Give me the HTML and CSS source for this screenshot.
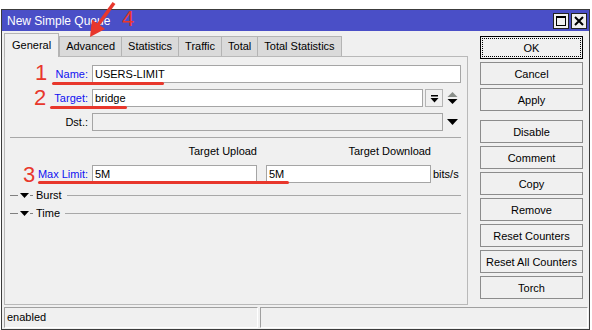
FILE: index.html
```html
<!DOCTYPE html>
<html lang="en">
  <head>
    <meta charset="UTF-8" />
    <title>New Simple Queue</title>
    <link rel="stylesheet" href="styles.css">
  </head>
  <body>
    <div class="screen">
      <div class="window">
        <div class="titlebar">
          <span class="title">New Simple Queue</span>
          <div class="win-btns">
            <span class="win-btn">
              <svg width="12" height="12" viewBox="0 0 12 12"><rect x="1.5" y="1.5" width="9" height="9" fill="none" stroke="#000" stroke-width="1"/><line x1="1" y1="2" x2="11" y2="2" stroke="#000" stroke-width="2"/></svg>
            </span>
            <span class="win-btn">
              <svg width="12" height="12" viewBox="0 0 12 12"><path d="M2 2 L10 10 M10 2 L2 10" stroke="#000" stroke-width="2"/></svg>
            </span>
          </div>
        </div>

        <div class="content">
          <div class="left">
            <div class="tabs">
              <div class="tab active">General</div>
              <div class="tab">Advanced</div>
              <div class="tab">Statistics</div>
              <div class="tab">Traffic</div>
              <div class="tab">Total</div>
              <div class="tab">Total Statistics</div>
            </div>

            <div class="panel">
              <div class="row">
                <label class="lbl link">Name:</label>
                <div class="field">USERS-LIMIT</div>
              </div>
              <div class="row">
                <label class="lbl link">Target:</label>
                <div class="field">bridge</div>
                <span class="dd-btn">
                  <svg width="9" height="9" viewBox="0 0 9 9"><rect x="1" y="1" width="7" height="1.5" fill="#000"/><path d="M0.5 4 H8.5 L4.5 8.5 Z" fill="#000"/></svg>
                </span>
                <span class="spin">
                  <svg width="11" height="14" viewBox="0 0 11 14"><path d="M0.5 6 L5.5 1 L10.5 6 Z" fill="#8a8f8a"/><path d="M0.5 8 H10.5 L5.5 13 Z" fill="#000"/></svg>
                </span>
              </div>
              <div class="row">
                <label class="lbl">Dst.:</label>
                <div class="field disabled"></div>
                <span class="dd-arrow">
                  <svg width="11" height="6" viewBox="0 0 11 6"><path d="M0 0 H11 L5.5 6 Z" fill="#000"/></svg>
                </span>
              </div>

              <div class="separator"></div>

              <div class="row heads">
                <span class="lbl"></span>
                <span class="head">Target Upload</span>
                <span class="head">Target Download</span>
              </div>
              <div class="row limits">
                <label class="lbl link">Max Limit:</label>
                <div class="field half">5M</div>
                <div class="field half">5M</div>
                <span class="unit">bits/s</span>
              </div>

              <div class="group">
                <span class="dash"></span>
                <svg class="tri" width="9" height="5" viewBox="0 0 9 5"><path d="M0 0 H9 L4.5 5 Z" fill="#000"/></svg>
                <span class="dash small"></span>
                <span class="group-name">Burst</span>
                <span class="rule"></span>
              </div>
              <div class="group">
                <span class="dash"></span>
                <svg class="tri" width="9" height="5" viewBox="0 0 9 5"><path d="M0 0 H9 L4.5 5 Z" fill="#000"/></svg>
                <span class="dash small"></span>
                <span class="group-name">Time</span>
                <span class="rule"></span>
              </div>
            </div>
          </div>

          <div class="buttons">
            <button class="btn ok">OK</button>
            <button class="btn">Cancel</button>
            <button class="btn">Apply</button>
            <button class="btn spaced">Disable</button>
            <button class="btn">Comment</button>
            <button class="btn">Copy</button>
            <button class="btn">Remove</button>
            <button class="btn">Reset Counters</button>
            <button class="btn">Reset All Counters</button>
            <button class="btn">Torch</button>
          </div>
        </div>

        <div class="statusbar">
          <div class="status first">enabled</div>
          <div class="status"></div>
        </div>
      </div>

      <!-- red annotations drawn over the dialog -->
      <span class="mark mark-1">1</span>
      <span class="mark mark-2">2</span>
      <span class="mark mark-3">3</span>
      <span class="mark mark-4">4</span>
      <span class="underline ul-name"></span>
      <span class="underline ul-target"></span>
      <span class="underline ul-limit"></span>
      <svg class="arrow" width="130" height="40" viewBox="0 0 130 40">
        <line x1="114" y1="3" x2="98" y2="25" stroke="#e8372c" stroke-width="3.5"/>
        <path d="M90 37 L92 19.5 L105 29 Z" fill="#e8372c"/>
      </svg>
    </div>
  </body>
</html>
```

FILE: styles.css
```css
body {
  margin: 0;
  padding: 0;
  background-color: #ffffff;
  font-family: "Liberation Sans", Arial, sans-serif;
  font-size: 11px;
  color: #000;
}

.screen {
  position: relative;
  width: 592px;
  height: 330px;
  overflow: hidden;
}

.window {
  margin: 9px 0 0 1px;
  width: 589px;
  height: 321px;
  box-sizing: border-box;
  border: 1px solid #3c3c3c;
  background-color: #f0f0f0;
  display: flex;
  flex-direction: column;
}

.titlebar {
  height: 21px;
  background-color: #4a4fc7;
  color: #fff;
  display: flex;
  align-items: center;
  padding-left: 5px;
}

.title {
  font-size: 12px;
  flex: 1;
}

.win-btns {
  display: flex;
  gap: 2px;
  margin-right: 2px;
}

.win-btn {
  width: 14px;
  height: 14px;
  border: 1px solid #222;
  background-color: #f0f0f0;
  display: flex;
  align-items: center;
  justify-content: center;
}

.content {
  display: flex;
  flex: 1;
  padding: 2px 0 0 2px;
}

/* Left side: tabs and panel */
.left {
  width: 464px;
  display: flex;
  flex-direction: column;
}

.tabs {
  display: flex;
  align-items: flex-end;
  height: 23px;
}

.tab {
  height: 19px;
  line-height: 19px;
  padding: 0 6px;
  border: 1px solid #b4b4b4;
  border-bottom: none;
  margin-right: -1px;
  background-color: #dadada;
  white-space: nowrap;
}

.tab.active {
  height: 23px;
  line-height: 22px;
  background-color: #f0f0f0;
  margin-bottom: -1px;
  margin-right: 0;
  padding: 0 7px;
  z-index: 1;
}

.panel {
  flex: 1;
  border: 1px solid #b9b9b9;
  padding: 8px 6px 0 0;
  margin-bottom: 0;
}

.row {
  display: flex;
  align-items: center;
  height: 18px;
  margin-bottom: 6px;
}

.lbl {
  width: 83px;
  padding-right: 4px;
  text-align: right;
  flex: none;
  white-space: nowrap;
}

.lbl.link {
  color: #1010f0;
}

.field {
  flex: 1;
  height: 18px;
  box-sizing: border-box;
  border: 1px solid #a5a5a5;
  background-color: #fff;
  padding: 0 2px;
  line-height: 16px;
}

.field.disabled {
  background-color: #f0f0f0;
}

.dd-btn {
  width: 18px;
  height: 18px;
  box-sizing: border-box;
  margin-left: 2px;
  border: 1px solid #b4b4b4;
  display: flex;
  align-items: center;
  justify-content: center;
}

.spin,
.dd-arrow {
  width: 18px;
  display: flex;
  justify-content: center;
}

.separator {
  height: 1px;
  background-color: #a8a8a8;
  margin: 1px 0 6px 5px;
}

.heads {
  height: 14px;
  margin-bottom: 7px;
}

.head {
  width: 165px;
  text-align: right;
  margin-right: 9px;
}

.limits {
  margin-bottom: 3px;
}

.field.half {
  flex: none;
  width: 165px;
}

.field.half + .field.half {
  margin-left: 9px;
}

.unit {
  margin-left: 2px;
}

.group {
  display: flex;
  align-items: center;
  height: 18px;
}

.dash {
  width: 8px;
  height: 1px;
  background-color: #808080;
  margin-left: 5px;
  margin-right: 2px;
}

.dash.small {
  width: 3px;
  margin-left: 1px;
  margin-right: 3px;
}

.group-name {
  margin-right: 5px;
}

.rule {
  flex: 1;
  height: 1px;
  background-color: #a8a8a8;
}

/* Right side buttons */
.buttons {
  display: flex;
  flex-direction: column;
  margin-left: 12px;
  padding-top: 3px;
}

.btn {
  width: 103px;
  height: 23px;
  margin-bottom: 3px;
  border: 1px solid #8c8c8c;
  background-color: #f0f0f0;
  font-family: "Liberation Sans", Arial, sans-serif;
  font-size: 11px;
  color: #000;
  padding: 0;
}

.btn.ok {
  border: 1px solid #000;
  outline: 1px dotted #000;
  outline-offset: -3px;
}

.btn.spaced {
  margin-top: 6px;
}

/* Status bar */
.statusbar {
  display: flex;
  gap: 2px;
  padding: 0 1px 1px 2px;
  margin-top: 2px;
}

.status {
  flex: 1;
  height: 21px;
  box-sizing: border-box;
  border: 1px solid #a0a0a0;
  border-right-color: #fff;
  border-bottom-color: #fff;
  line-height: 19px;
  padding-left: 2px;
}

.status.first {
  flex: none;
  width: 254px;
}

/* Annotations */
.mark {
  position: absolute;
  color: #e8372c;
  font-size: 22px;
  line-height: 22px;
}

.mark-1 { left: 35px; top: 62px; }
.mark-2 { left: 34px; top: 87px; }
.mark-3 { left: 23px; top: 164px; }
.mark-4 { left: 122px; top: 8px; }

.underline {
  position: absolute;
  height: 3px;
  background-color: #e8372c;
  border-radius: 2px;
}

.ul-name { left: 52px; top: 82px; width: 112px; }
.ul-target { left: 50px; top: 106px; width: 77px; }
.ul-limit { left: 38px; top: 181px; width: 251px; }

.arrow {
  position: absolute;
  left: 0;
  top: 0;
}
```
